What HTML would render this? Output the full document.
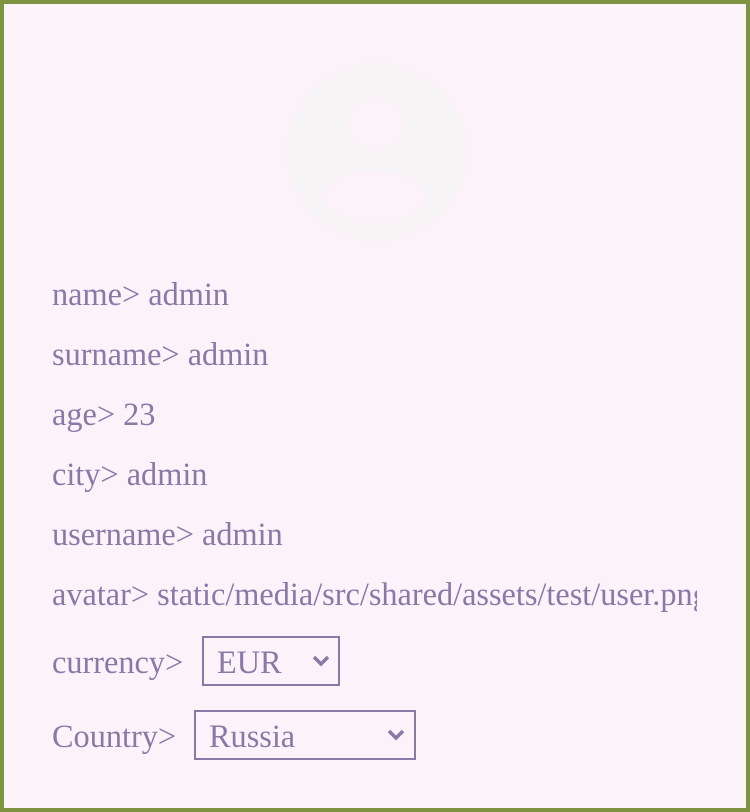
<!DOCTYPE html>
<html><head><meta charset="utf-8"><style>
html,body{margin:0;padding:0}
body{width:750px;height:812px;overflow:hidden;background:#fbf2fa;position:relative;font-family:"Liberation Serif",serif;color:#8a78a6}
.frame{position:absolute;left:0;top:0;width:742px;height:804px;border:4px solid #7f9441}
.t{position:absolute;left:52px;font-size:32.3px;line-height:36px;white-space:nowrap}
.clip{position:absolute;left:0;top:0;width:697px;height:812px;overflow:hidden}
.sel{position:absolute;border:2px solid #8a78a6;box-sizing:border-box;font-size:32.3px;line-height:44px}
.sel span{position:absolute;left:13px;top:2px}
.sel svg{position:absolute;top:17px}
</style></head><body>
<div class="frame"></div>
<svg style="position:absolute;left:0;top:0" width="750" height="812">
<defs><filter id="b"><feGaussianBlur stdDeviation="2"/></filter></defs>
<g filter="url(#b)">
<circle cx="377" cy="152" r="88" fill="#f6f4f4"/>
<circle cx="377" cy="124" r="28" fill="#fbf2fa"/>
<ellipse cx="375" cy="197" rx="52" ry="27" fill="#fbf2fa"/>
</g>
</svg>
<div class="clip">
<div class="t" style="top:276px">name&gt; admin</div>
<div class="t" style="top:336px">surname&gt; admin</div>
<div class="t" style="top:396px">age&gt; 23</div>
<div class="t" style="top:456px">city&gt; admin</div>
<div class="t" style="top:516px">username&gt; admin</div>
<div class="t" style="top:576px">avatar&gt; static/media/src/shared/assets/test/user.png</div>
</div>
<div class="t" style="top:644px">currency&gt;</div>
<div class="t" style="top:718px">Country&gt;</div>
<div class="sel" style="left:202px;top:636px;width:138px;height:50px"><span>EUR</span>
<svg style="left:108px" width="18" height="12" viewBox="0 0 18 12"><path d="M2 2l7 7 7-7" stroke="#8a78a6" stroke-width="3.5" fill="none"/></svg></div>
<div class="sel" style="left:194px;top:710px;width:222px;height:50px"><span>Russia</span>
<svg style="left:191px" width="18" height="12" viewBox="0 0 18 12"><path d="M2 2l7 7 7-7" stroke="#8a78a6" stroke-width="3.5" fill="none"/></svg></div>
</body></html>
